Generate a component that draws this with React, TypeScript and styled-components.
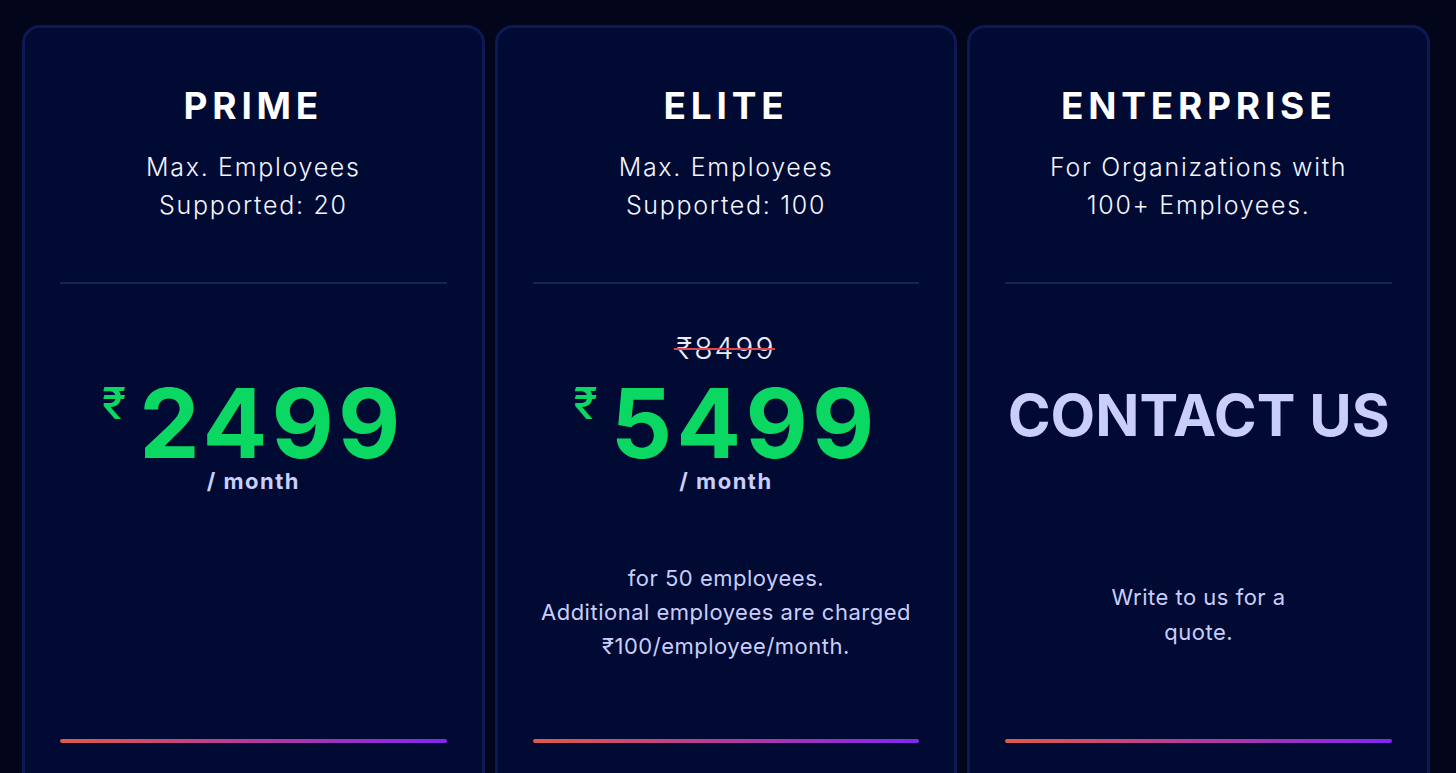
import styled, { createGlobalStyle } from 'styled-components';

type Plan = {
  name: string;
  subtitle: string[];
  oldPrice?: string;
  price?: string;
  note?: string[];
  narrowNote?: boolean;
};

const plans: Plan[] = [
  {
    name: 'PRIME',
    subtitle: ['Max. Employees', 'Supported: 20'],
    price: '2499',
  },
  {
    name: 'ELITE',
    subtitle: ['Max. Employees', 'Supported: 100'],
    oldPrice: '₹8499',
    price: '5499',
    note: ['for 50 employees.', 'Additional employees are charged', '₹100/employee/month.'],
  },
  {
    name: 'ENTERPRISE',
    subtitle: ['For Organizations with', '100+ Employees.'],
    note: ['Write to us for a', 'quote.'],
    narrowNote: true,
  },
];

const GlobalStyle = createGlobalStyle`
  html, body {
    margin: 0;
    padding: 0;
    height: 100%;
    overflow: hidden;
    background: #03051a;
    font-family: Inter, 'Noto Sans', sans-serif;
  }
`;

const Grid = styled.div`
  display: grid;
  grid-template-columns: repeat(3, minmax(0, 1fr));
  gap: 10px;
  padding: 25px 26px 0 22px;
`;

const Card = styled.div`
  height: 800px;
  background: #000a33;
  border: 3px solid #0b1a52;
  border-radius: 18px;
  padding: 0 35px;
  display: flex;
  flex-direction: column;
  text-align: center;
  min-width: 0;
`;

const Header = styled.div`
  height: 254px;
  padding-top: 56px;
  box-sizing: border-box;
`;

const Title = styled.h2`
  margin: 0;
  font-size: 37px;
  line-height: 44px;
  font-weight: 700;
  letter-spacing: 4.8px;
  color: #ffffff;
`;

const Subtitle = styled.p`
  margin: 20px 0 0;
  font-size: 25px;
  line-height: 38px;
  font-weight: 300;
  letter-spacing: 1.7px;
  color: #f4f5ff;
`;

const Divider = styled.hr`
  margin: 0;
  border: none;
  height: 2px;
  background: #17244f;
`;

const PriceArea = styled.div`
  height: 236px;
  padding-top: 47px;
  box-sizing: border-box;
  display: flex;
  flex-direction: column;
  align-items: center;
`;

const StrikeSlot = styled.div`
  height: 47px;
  padding-top: 2px;
  box-sizing: border-box;
`;

const OldPrice = styled.span`
  position: relative;
  display: inline-block;
  font-size: 30px;
  line-height: 30px;
  font-weight: 300;
  letter-spacing: 2px;
  color: #e9ebff;

  &::after {
    content: '';
    position: absolute;
    left: -3px;
    right: 0;
    top: 15px;
    height: 2px;
    background: #e2454a;
  }
`;

const PriceRow = styled.div`
  display: flex;
  align-items: flex-start;
  justify-content: center;
`;

const Rupee = styled.span`
  font-size: 44px;
  line-height: 40px;
  font-weight: 500;
  margin-top: 5px;
  margin-right: 13px;
  color: #0ad862;
`;

const Amount = styled.span`
  font-size: 96px;
  line-height: 90px;
  font-weight: 700;
  letter-spacing: 4.2px;
  color: #0ad862;
`;

const Period = styled.div`
  margin-top: 2px;
  font-size: 22px;
  line-height: 22px;
  font-weight: 700;
  letter-spacing: 1.5px;
  color: #c9cefa;
`;

const Contact = styled.div`
  margin-top: 1px;
  font-size: 58px;
  line-height: 72px;
  font-weight: 700;
  white-space: nowrap;
  color: #c9cefa;
`;

const NoteArea = styled.div`
  height: 184px;
  display: flex;
  align-items: center;
  justify-content: center;
`;

const Note = styled.p<{ narrow?: boolean }>`
  margin: ${({ narrow }) => (narrow ? '6px 0 0' : '0')};
  font-size: 22px;
  line-height: ${({ narrow }) => (narrow ? '35px' : '34px')};
  font-weight: 400;
  letter-spacing: 0.5px;
  color: #c9cefa;
`;

const Bar = styled.div`
  margin-top: 35px;
  height: 4px;
  border-radius: 2px;
  background: linear-gradient(90deg, #e05a48 0%, #b23a9c 50%, #8226f0 100%);
`;

const PlanCard: React.FC<{ plan: Plan }> = ({ plan }) => (
  <Card>
    <Header>
      <Title>{plan.name}</Title>
      <Subtitle>
        {plan.subtitle[0]}
        <br />
        {plan.subtitle[1]}
      </Subtitle>
    </Header>
    <Divider />
    <PriceArea>
      <StrikeSlot>{plan.oldPrice && <OldPrice>{plan.oldPrice}</OldPrice>}</StrikeSlot>
      {plan.price ? (
        <>
          <PriceRow>
            <Rupee>₹</Rupee>
            <Amount>{plan.price}</Amount>
          </PriceRow>
          <Period>/ month</Period>
        </>
      ) : (
        <Contact>CONTACT US</Contact>
      )}
    </PriceArea>
    <NoteArea>
      {plan.note && (
        <Note narrow={plan.narrowNote}>
          {plan.note.map((line, i) => (
            <span key={i}>
              {line}
              {i < plan.note!.length - 1 && <br />}
            </span>
          ))}
        </Note>
      )}
    </NoteArea>
    <Bar />
  </Card>
);

const App = () => (
  <>
    <GlobalStyle />
    <Grid>
      {plans.map((p) => (
        <PlanCard key={p.name} plan={p} />
      ))}
    </Grid>
  </>
);

export default App;
